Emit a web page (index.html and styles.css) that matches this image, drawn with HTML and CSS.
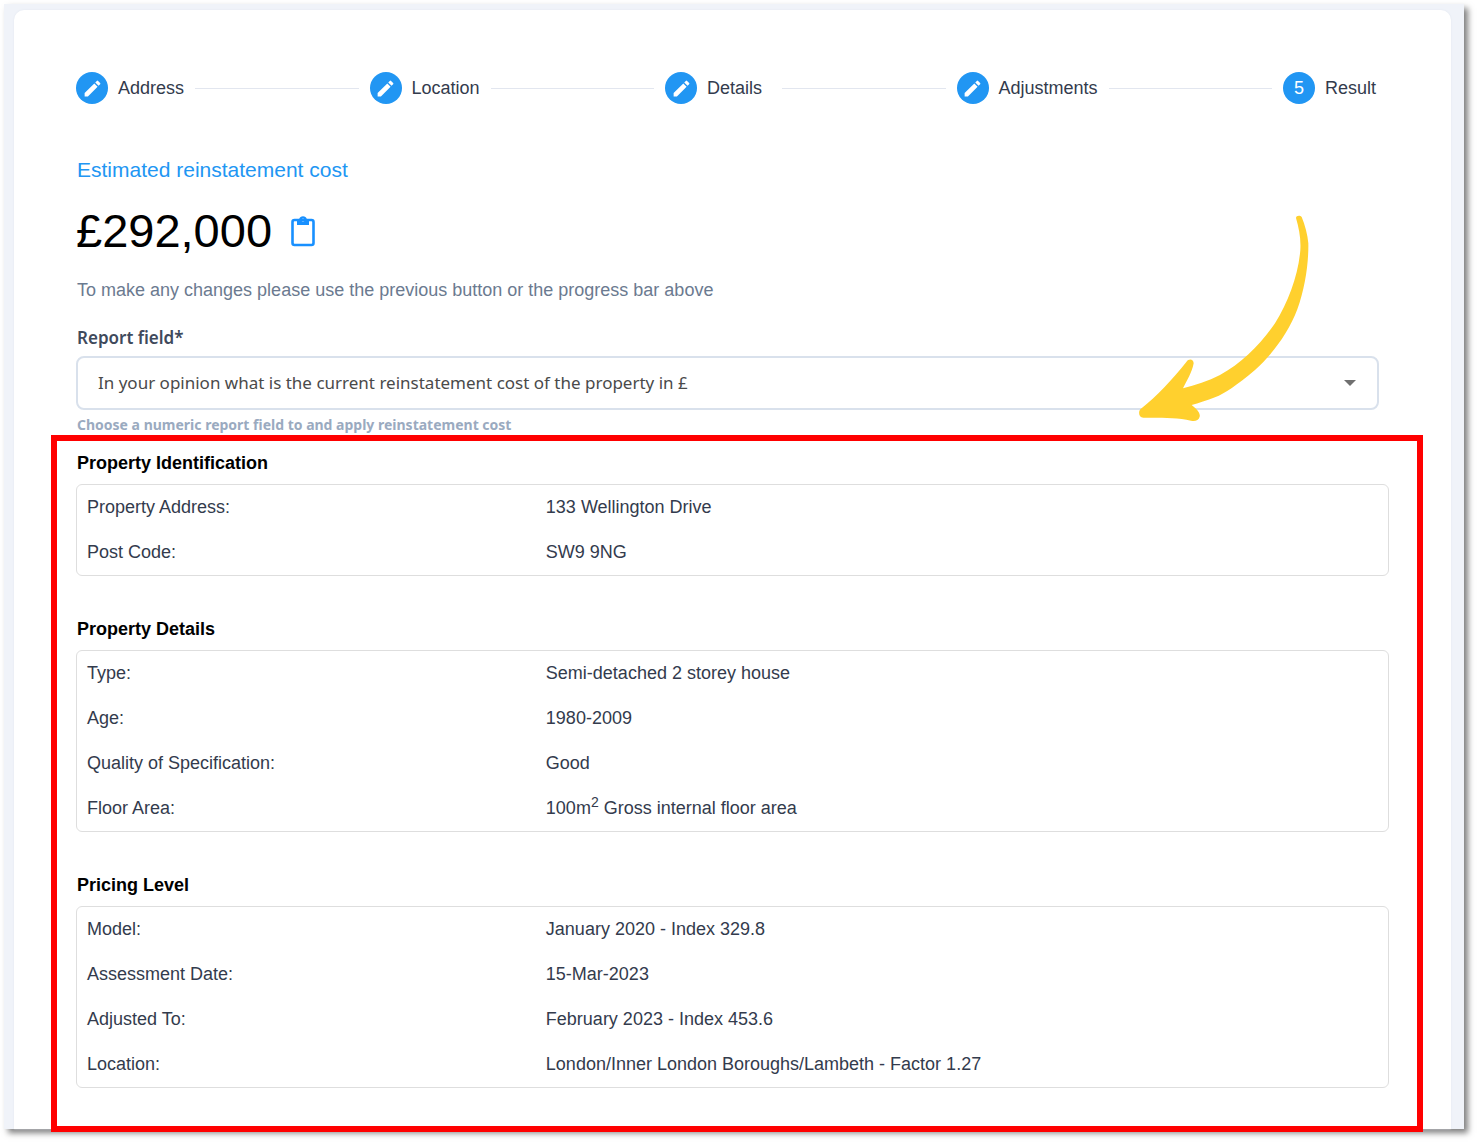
FILE: index.html
```html
<!DOCTYPE html>
<html lang="en">
<head>
<meta charset="utf-8">
<meta name="viewport" content="width=device-width, initial-scale=1">
<title>Estimated reinstatement cost</title>
<link rel="stylesheet" href="styles.css">
</head>
<body>
<svg class="sprite" aria-hidden="true">
  <symbol id="pencil" viewBox="0 0 24 24">
    <path d="M3 17.25V21h3.75L17.81 9.94l-3.75-3.75L3 17.25zM20.71 7.04a1 1 0 0 0 0-1.41l-2.34-2.34a1 1 0 0 0-1.41 0l-1.83 1.83 3.75 3.75 1.83-1.83z"/>
  </symbol>
</svg>
<div class="frame">
  <main class="card">
    <div class="summary">
      <ol class="stepper">
        <li class="step"><button type="button" class="step-button"><span class="badge"><svg class="pencil"><use href="#pencil"/></svg></span><span class="step-label">Address</span></button></li>
        <li class="line" aria-hidden="true"></li>
        <li class="step"><button type="button" class="step-button"><span class="badge"><svg class="pencil"><use href="#pencil"/></svg></span><span class="step-label">Location</span></button></li>
        <li class="line" aria-hidden="true"></li>
        <li class="step"><button type="button" class="step-button"><span class="badge"><svg class="pencil"><use href="#pencil"/></svg></span><span class="step-label">Details</span></button></li>
        <li class="line" aria-hidden="true"></li>
        <li class="step"><button type="button" class="step-button"><span class="badge"><svg class="pencil"><use href="#pencil"/></svg></span><span class="step-label">Adjustments</span></button></li>
        <li class="line" aria-hidden="true"></li>
        <li class="step"><button type="button" class="step-button" aria-current="step"><span class="badge">5</span><span class="step-label">Result</span></button></li>
      </ol>
      <h1 class="title">Estimated reinstatement cost</h1>
      <div class="price">
        <span>£292,000</span>
        <button type="button" class="copy" aria-label="Copy cost">
          <svg class="copy-icon" viewBox="0 0 24 32" fill="none" stroke="currentColor">
            <rect x="1.500" y="5" width="21" height="25" rx="2" stroke-width="2.600"/>
            <path d="M6 4h2.200a4 4 0 0 1 7.600 0H18v6H6zM12 3.400a1.500 1.500 0 1 0 0 3a1.500 1.500 0 0 0 0-3z" fill="currentColor" fill-rule="evenodd" stroke="none"/>
          </svg>
        </button>
      </div>
      <p class="note">To make any changes please use the previous button or the progress bar above</p>
      <div class="field">
        <label class="field-label" for="report-field">Report field*</label>
        <div class="select-wrap">
          <select class="select" id="report-field" aria-describedby="report-hint">
            <option>In your opinion what is the current reinstatement cost of the property in £</option>
          </select>
          <svg class="caret" viewBox="0 0 12 6" aria-hidden="true"><path d="M0 0h12L6 6z"/></svg>
        </div>
        <p class="hint" id="report-hint">Choose a numeric report field to and apply reinstatement cost</p>
      </div>
    </div>
    <div class="highlight">
      <section class="group">
        <h2 class="group-title">Property Identification</h2>
        <table class="facts">
          <tr><th scope="row">Property Address:</th><td>133 Wellington Drive</td></tr>
          <tr><th scope="row">Post Code:</th><td>SW9 9NG</td></tr>
        </table>
      </section>
      <section class="group">
        <h2 class="group-title">Property Details</h2>
        <table class="facts">
          <tr><th scope="row">Type:</th><td>Semi-detached 2 storey house</td></tr>
          <tr><th scope="row">Age:</th><td>1980-2009</td></tr>
          <tr><th scope="row">Quality of Specification:</th><td>Good</td></tr>
          <tr><th scope="row">Floor Area:</th><td>100m<sup>2</sup> Gross internal floor area</td></tr>
        </table>
      </section>
      <section class="group">
        <h2 class="group-title">Pricing Level</h2>
        <table class="facts">
          <tr><th scope="row">Model:</th><td>January 2020 - Index 329.8</td></tr>
          <tr><th scope="row">Assessment Date:</th><td>15-Mar-2023</td></tr>
          <tr><th scope="row">Adjusted To:</th><td>February 2023 - Index 453.6</td></tr>
          <tr><th scope="row">Location:</th><td>London/Inner London Boroughs/Lambeth - Factor 1.27</td></tr>
        </table>
      </section>
    </div>
    <svg class="arrow" viewBox="0 0 630 720" aria-hidden="true">
      <path d="M528 54C528 46 541 45 545 51C555 75 563 105 565 130C566 190 555 265 532 328C505 400 455 465 405 510C350 556 315 580 285 592C262 601 235 610 215 615C228 625 242 638 239 650C236 662 225 664 213 662C170 652 120 653 70 653C56 652 54 635 62 627C110 590 160 535 199 486C207 474 221 478 221 490C216 518 200 543 189 565C225 556 265 543 300 525C365 490 420 435 465 370C505 305 535 225 541 150C543 115 537 85 528 54Z"/>
    </svg>
  </main>
</div>
</body>
</html>
```
FILE: styles.css
```css
*,
*::before,
*::after {
  box-sizing: border-box;
}

body {
  margin: 0;
  padding: 4px 13px 13px 4px;
  background: #fff;
  color: #333b4d;
  font: 18px/24px "Liberation Sans", Arial, sans-serif;
}

h1,
h2,
p,
ol {
  margin: 0;
  padding: 0;
}

button {
  border: 0;
  padding: 0;
  background: none;
  color: inherit;
  font: inherit;
  cursor: pointer;
}

.sprite {
  display: none;
}

.frame {
  padding: 6px 13px 0 10px;
  background: #f0f3f9;
  box-shadow: 4px 4px 6px rgba(0, 0, 0, 0.5);
}

.card {
  position: relative;
  display: flow-root;
  padding: 62px 28px 0 37px;
  border-radius: 10px 10px 0 0;
  background: #fff;
  box-shadow: 0 0 2px #dfe5ee;
}

.summary {
  padding: 0 44px 0 25px;
}

/* Progress steps */
.stepper {
  display: flex;
  align-items: center;
  gap: 11px;
  margin-right: -10px;
  list-style: none;
}

.step-button {
  display: flex;
  align-items: center;
  gap: 10px;
}

.step-label {
  min-width: 64px;
  text-align: left;
}

.badge {
  display: grid;
  place-items: center;
  width: 32px;
  height: 32px;
  border-radius: 50%;
  background: #2196f3;
  color: #fff;
}

.pencil {
  width: 21px;
  height: 21px;
  fill: currentColor;
}

.line {
  flex: 1;
  height: 1px;
  background: #e2e6ef;
}

.title {
  margin: 52px 0 19px 1px;
  color: #2196f3;
  font-size: 21px;
  font-weight: 400;
  line-height: 28px;
}

.price {
  display: flex;
  align-items: center;
  gap: 19px;
  color: #000;
  font-size: 47px;
  line-height: 56px;
}

.copy {
  color: #1890ff;
}

.copy-icon {
  display: block;
  width: 24px;
  height: 32px;
}

.note {
  margin: 19px 0 24px 1px;
  color: #6b7a90;
}

/* Report field */
.field {
  font-family: "Noto Sans", "Open Sans", sans-serif;
}

.field-label {
  display: block;
  margin: 0 0 6px 1px;
  color: #3f4a5c;
  font-size: 17px;
  font-weight: 600;
}

.select-wrap {
  position: relative;
}

.select {
  display: block;
  width: 100%;
  height: 54px;
  padding: 0 48px 0 20px;
  border: 2px solid #d9e1ec;
  border-radius: 8px;
  appearance: none;
  background: #fff;
  color: #4a4a4a;
  font: 17px/24px "Noto Sans", "Open Sans", sans-serif;
}

.caret {
  position: absolute;
  top: 24px;
  right: 23px;
  width: 12px;
  height: 6px;
  fill: #707070;
  pointer-events: none;
}

.hint {
  margin: 5px 0 0 1px;
  color: #9aaac0;
  font-size: 14px;
  font-weight: 700;
  line-height: 20px;
}

/* Outlined result groups */
.highlight {
  display: grid;
  gap: 41px;
  margin-bottom: -3px;
  padding: 10px 28px 38px 19px;
  border: 6px solid #f00;
}

.group-title {
  margin: 0 0 9px 1px;
  color: #000;
  font-size: 18px;
  font-weight: 700;
  line-height: 24px;
}

.facts {
  width: 100%;
  border: 1px solid #dedede;
  border-radius: 6px;
  border-spacing: 0;
  table-layout: fixed;
}

.facts th,
.facts td {
  height: 45px;
  padding: 0 10px 2px;
  font-weight: 400;
  text-align: left;
}

.facts th {
  width: 35%;
}

.facts sup {
  font-size: 14px;
  line-height: 0;
}

.arrow {
  position: absolute;
  top: 190px;
  right: 121px;
  width: 210px;
  height: 240px;
  fill: #ffd02e;
  pointer-events: none;
}
```
